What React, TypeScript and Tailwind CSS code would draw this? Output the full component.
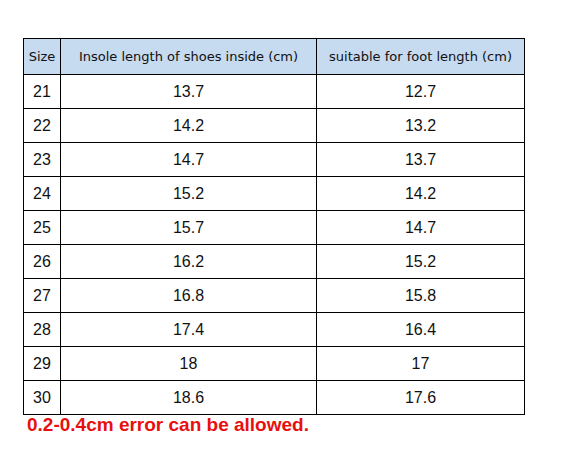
const ROWS: [string, string, string][] = [
  ['21', '13.7', '12.7'],
  ['22', '14.2', '13.2'],
  ['23', '14.7', '13.7'],
  ['24', '15.2', '14.2'],
  ['25', '15.7', '14.7'],
  ['26', '16.2', '15.2'],
  ['27', '16.8', '15.8'],
  ['28', '17.4', '16.4'],
  ['29', '18', '17'],
  ['30', '18.6', '17.6'],
];

export default function App() {
  return (
    <div className="w-[570px] h-[452px] bg-white pt-[38px] pl-[23px]">
      <table className="border-collapse table-fixed w-[501px] text-[#111]">
        <colgroup>
          <col className="w-[37px]" />
          <col className="w-[256px]" />
          <col className="w-[208px]" />
        </colgroup>
        <thead>
          <tr className="h-[36px] bg-[#c6daf0] font-['DejaVu_Sans',sans-serif] text-[13px]">
            <th className="border border-black font-normal p-0">Size</th>
            <th className="border border-black font-normal p-0">Insole length of shoes inside (cm)</th>
            <th className="border border-black font-normal p-0">suitable for foot length (cm)</th>
          </tr>
        </thead>
        <tbody className="font-['Liberation_Sans',Arial,sans-serif] text-[16px]">
          {ROWS.map(([size, insole, foot]) => (
            <tr key={size} className="h-[34px]">
              <td className="border border-black text-center p-0">{size}</td>
              <td className="border border-black text-center p-0">{insole}</td>
              <td className="border border-black text-center p-0">{foot}</td>
            </tr>
          ))}
        </tbody>
      </table>
      <div className="pl-[4px] font-['Liberation_Sans',Arial,sans-serif] font-bold text-[19px] leading-[20px] text-[#e8100f]">
        0.2-0.4cm error can be allowed.
      </div>
    </div>
  );
}
